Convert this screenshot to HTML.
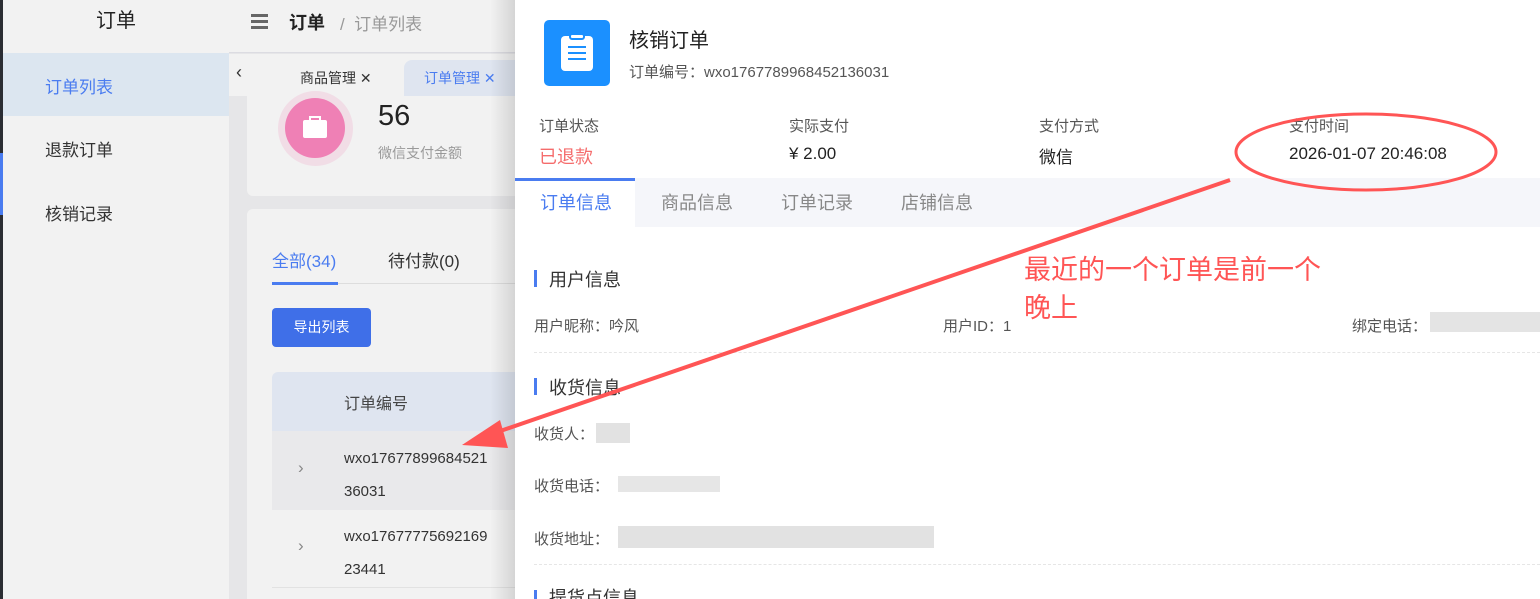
<!DOCTYPE html>
<html><head><meta charset="utf-8"><style>
*{margin:0;padding:0;box-sizing:border-box}
html{overflow:hidden;width:1540px;height:599px}
body{width:1540px;height:599px;overflow:hidden;position:relative;background:#e6e6e8;font-family:"Liberation Sans","Noto Sans CJK SC",sans-serif;color:#333}
.a{position:absolute;white-space:nowrap}
</style></head><body>
<div class="a" style="left:0;top:0;width:3px;height:599px;background:#2b2d33"></div>
<div class="a" style="left:0;top:153px;width:3px;height:62px;background:#4a7cf0"></div>
<div class="a" style="left:3px;top:0;width:226px;height:599px;background:#f2f2f2"></div>
<div class="a" style="left:3px;top:0;width:226px;height:53px;text-align:center;line-height:42px;font-size:20px;color:#222">订单</div>
<div class="a" style="left:3px;top:53px;width:226px;height:63px;background:#dce6f0"></div>
<div class="a" style="left:45px;top:73px;font-size:17px;color:#4a7cf0">订单列表</div>
<div class="a" style="left:45px;top:136px;font-size:17px;color:#333">退款订单</div>
<div class="a" style="left:45px;top:200px;font-size:17px;color:#333">核销记录</div>
<div class="a" style="left:229px;top:0;width:300px;height:53px;background:#f2f2f2;border-bottom:1px solid #dcdce2"></div>
<div class="a" style="left:251px;top:14px;width:17px;height:3px;background:#666;box-shadow:0 6px 0 #666,0 12px 0 #666"></div>
<div class="a" style="left:289px;top:9px;font-size:18px;font-weight:bold;color:#222">订单</div>
<div class="a" style="left:340px;top:10px;font-size:17px;color:#999">/&nbsp; 订单列表</div>
<div class="a" style="left:229px;top:54px;width:300px;height:42px;background:#f2f2f2"></div>
<div class="a" style="left:236px;top:62px;font-size:18px;color:#333">‹</div>
<div class="a" style="left:300px;top:68px;font-size:14px;color:#333">商品管理 ✕</div>
<div class="a" style="left:404px;top:60px;width:120px;height:36px;background:#dfe5f0;border-radius:8px 0 0 0"></div>
<div class="a" style="left:424px;top:68px;font-size:14px;color:#4a7cf0">订单管理 ✕</div>
<div class="a" style="left:247px;top:96px;width:280px;height:100px;background:#f2f2f2;border-radius:0 0 6px 6px"></div>
<div class="a" style="left:278px;top:91px;width:75px;height:75px;border-radius:50%;background:#f1dde6"></div>
<div class="a" style="left:285px;top:98px;width:60px;height:60px;border-radius:50%;background:#ef80b5"></div>
<div class="a" style="left:303px;top:120px;width:24px;height:18px;background:#fff;border-radius:2px"></div>
<div class="a" style="left:309px;top:116px;width:12px;height:5px;border:2px solid #fff;border-bottom:none"></div>
<div class="a" style="left:378px;top:100px;font-size:29px;color:#222">56</div>
<div class="a" style="left:378px;top:143px;font-size:14px;color:#999">微信支付金额</div>
<div class="a" style="left:247px;top:209px;width:280px;height:390px;background:#f2f2f2;border-radius:6px 6px 0 0"></div>
<div class="a" style="left:272px;top:247px;font-size:17px;color:#4a7cf0">全部(34)</div>
<div class="a" style="left:388px;top:247px;font-size:17px;color:#333">待付款(0)</div>
<div class="a" style="left:272px;top:283px;width:250px;height:1px;background:#ddd"></div>
<div class="a" style="left:272px;top:282px;width:66px;height:3px;background:#4a7cf0"></div>
<div class="a" style="left:272px;top:308px;width:99px;height:39px;background:#3f6fe8;border-radius:4px;color:#fff;font-size:14px;text-align:center;line-height:39px">导出列表</div>
<div class="a" style="left:272px;top:372px;width:250px;height:59px;background:#dfe5f0;border-radius:6px 6px 0 0"></div>
<div class="a" style="left:344px;top:390px;font-size:16px;color:#444">订单编号</div>
<div class="a" style="left:272px;top:431px;width:250px;height:79px;background:#e9e9eb"></div>
<div class="a" style="left:298px;top:458px;font-size:17px;color:#888">›</div>
<div class="a" style="left:344px;top:442px;font-size:15px;line-height:33px;color:#333">wxo17677899684521<br>36031</div>
<div class="a" style="left:298px;top:536px;font-size:17px;color:#888">›</div>
<div class="a" style="left:344px;top:520px;font-size:15px;line-height:33px;color:#333">wxo17677775692169<br>23441</div>
<div class="a" style="left:272px;top:587px;width:250px;height:1px;background:#e2e2e2"></div>
<div class="a" style="left:490px;top:0;width:25px;height:599px;background:linear-gradient(to right,rgba(0,0,0,0),rgba(0,0,0,.12))"></div>
<div class="a" style="left:515px;top:0;width:1025px;height:599px;background:#fff;overflow:hidden">
<div class="a" style="left:29px;top:20px;width:66px;height:66px;background:#1b90ff;border-radius:5px"></div>
<div class="a" style="left:46px;top:36px;width:32px;height:35px;background:#fff;border-radius:4px"></div>
<div class="a" style="left:54px;top:33px;width:16px;height:7px;background:#fff;border:2px solid #1b90ff;border-radius:3px"></div>
<div class="a" style="left:53px;top:46px;width:18px;height:2px;background:#1b90ff;box-shadow:0 6px 0 #1b90ff,0 12px 0 #1b90ff"></div>
<div class="a" style="left:114px;top:24px;font-size:20px;color:#222">核销订单</div>
<div class="a" style="left:114px;top:61px;font-size:15px;color:#555">订单编号：wxo1767789968452136031</div>
<div class="a" style="left:24px;top:115px;font-size:15px;color:#555">订单状态</div>
<div class="a" style="left:24px;top:143px;font-size:18px;color:#f56c6c">已退款</div>
<div class="a" style="left:274px;top:115px;font-size:15px;color:#555">实际支付</div>
<div class="a" style="left:274px;top:144px;font-size:17px;color:#222">¥ 2.00</div>
<div class="a" style="left:524px;top:115px;font-size:15px;color:#555">支付方式</div>
<div class="a" style="left:524px;top:143px;font-size:17px;color:#222">微信</div>
<div class="a" style="left:774px;top:115px;font-size:15px;color:#555">支付时间</div>
<div class="a" style="left:774px;top:144px;font-size:17px;color:#222">2026-01-07 20:46:08</div>
<div class="a" style="left:0;top:178px;width:1025px;height:49px;background:#f5f6fa"></div>
<div class="a" style="left:0;top:178px;width:120px;height:49px;background:#fff;border-top:3px solid #4a7cf0"></div>
<div class="a" style="left:25px;top:189px;font-size:18px;color:#4a7cf0">订单信息</div>
<div class="a" style="left:146px;top:189px;font-size:18px;color:#888">商品信息</div>
<div class="a" style="left:266px;top:189px;font-size:18px;color:#888">订单记录</div>
<div class="a" style="left:386px;top:189px;font-size:18px;color:#888">店铺信息</div>
<div class="a" style="left:19px;top:270px;width:3px;height:17px;background:#4a7cf0"></div>
<div class="a" style="left:34px;top:266px;font-size:18px;color:#333">用户信息</div>
<div class="a" style="left:19px;top:315px;font-size:15px;color:#555">用户昵称：吟风</div>
<div class="a" style="left:428px;top:315px;font-size:15px;color:#555">用户ID：1</div>
<div class="a" style="left:837px;top:315px;font-size:15px;color:#555">绑定电话：</div>
<div class="a" style="left:915px;top:312px;width:110px;height:20px;background:#e4e4e4"></div>
<div class="a" style="left:19px;top:352px;width:1006px;border-top:1px dashed #e6e6e6"></div>
<div class="a" style="left:19px;top:378px;width:3px;height:17px;background:#4a7cf0"></div>
<div class="a" style="left:34px;top:374px;font-size:18px;color:#333">收货信息</div>
<div class="a" style="left:19px;top:423px;font-size:15px;color:#555">收货人：</div>
<div class="a" style="left:81px;top:423px;width:34px;height:20px;background:#e2e2e2"></div>
<div class="a" style="left:19px;top:475px;font-size:15px;color:#555">收货电话：</div>
<div class="a" style="left:103px;top:476px;width:102px;height:16px;background:#e6e6e6"></div>
<div class="a" style="left:19px;top:528px;font-size:15px;color:#555">收货地址：</div>
<div class="a" style="left:103px;top:526px;width:316px;height:22px;background:#e2e2e2"></div>
<div class="a" style="left:19px;top:564px;width:1006px;border-top:1px dashed #e6e6e6"></div>
<div class="a" style="left:19px;top:590px;width:3px;height:17px;background:#4a7cf0"></div>
<div class="a" style="left:34px;top:584px;font-size:18px;color:#333">提货点信息</div>
</div>
<svg class="a" style="left:0;top:0" width="1540" height="599">
<ellipse cx="1366" cy="152" rx="130" ry="38" fill="none" stroke="#f55" stroke-width="3"/>
<line x1="1230" y1="180" x2="480" y2="438" stroke="#f55" stroke-width="4"/>
<polygon points="462,445 500,420 508,448" fill="#f55"/>
</svg>
<div class="a" style="left:1024px;top:251px;font-size:27px;line-height:38px;color:#f55">最近的一个订单是前一个<br>晚上</div>
</body></html>
